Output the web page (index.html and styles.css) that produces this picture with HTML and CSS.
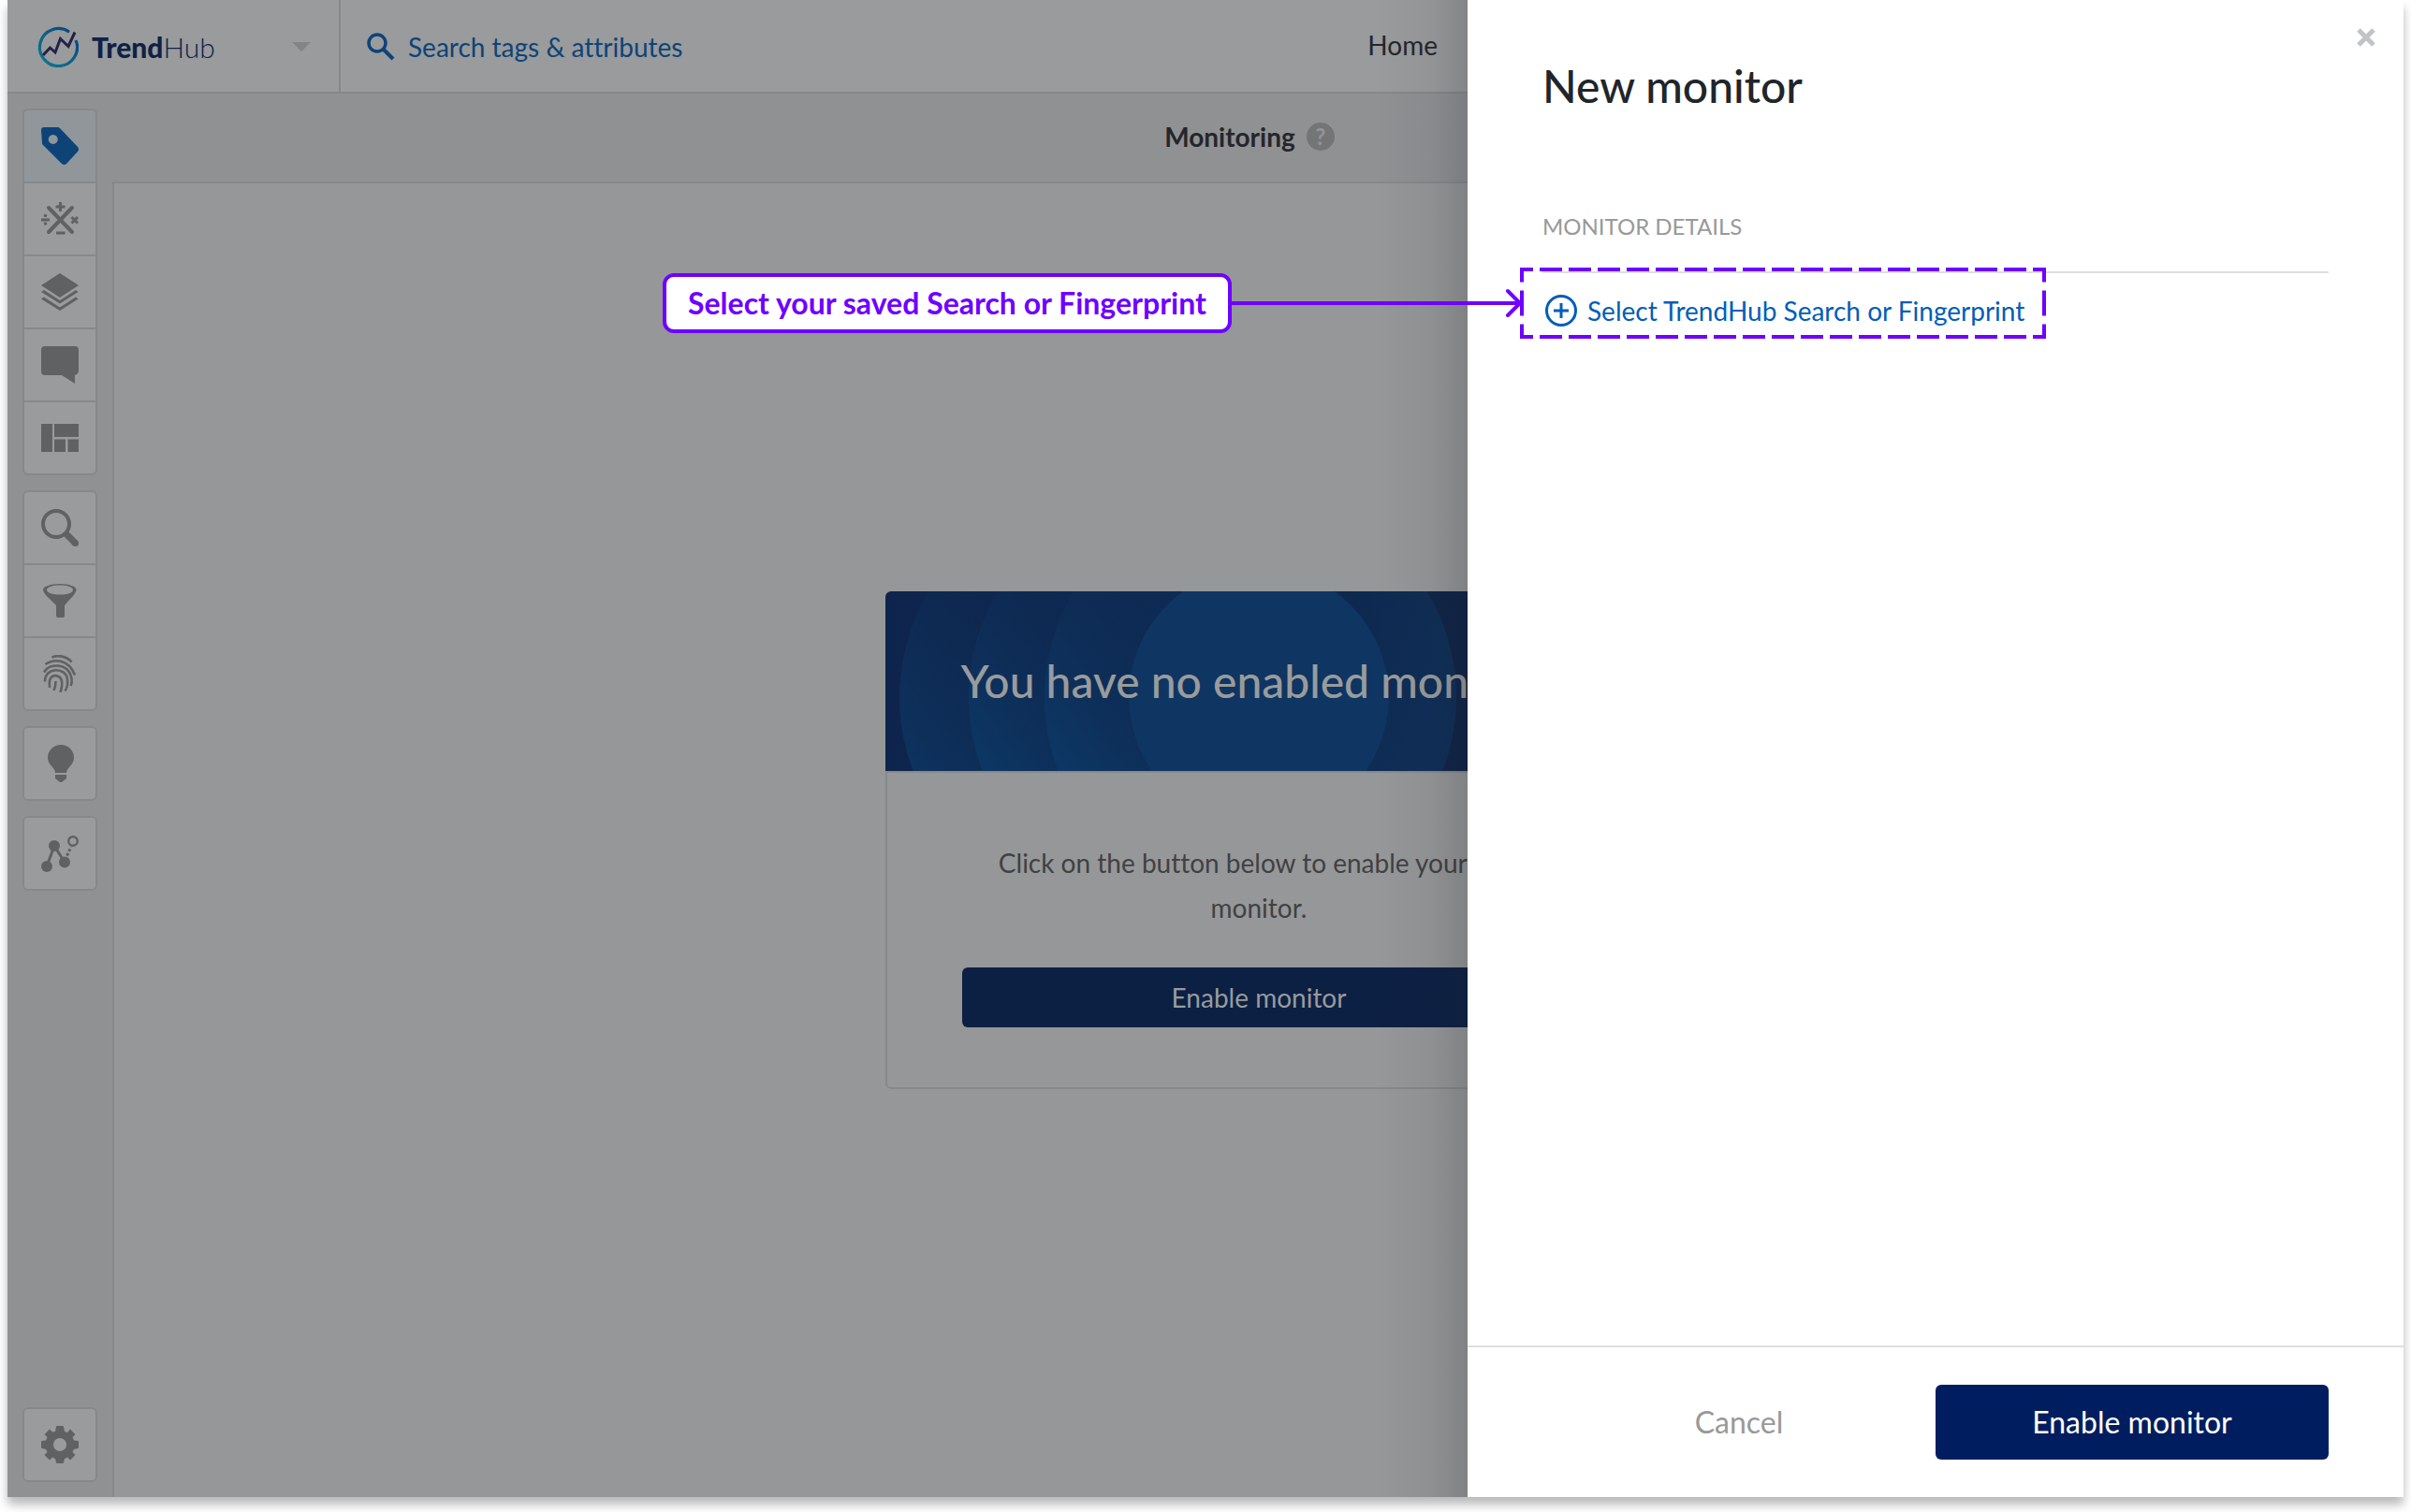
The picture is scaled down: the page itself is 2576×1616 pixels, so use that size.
FILE: index.html
```html
<!DOCTYPE html>
<html lang="en">
<head>
<meta charset="utf-8">
<meta name="viewport" content="width=device-width, initial-scale=1">
<title>TrendHub – New monitor</title>
<link rel="stylesheet" href="styles.css">
</head>
<body>
<div class="window">
  <header class="topbar">
    <button class="brand" type="button" aria-label="Switch application">
      <svg class="brand-mark" viewBox="0 0 44 44" aria-hidden="true">
        <defs>
          <linearGradient id="ring" x1="0" y1="1" x2="1" y2="0">
            <stop offset="0" stop-color="#0a7a8e"/>
            <stop offset="0.5" stop-color="#0a5f8a"/>
            <stop offset="1" stop-color="#0c3f80"/>
          </linearGradient>
        </defs>
        <path d="M34 6.200A20 20 0 1 0 41 15" fill="none" stroke="url(#ring)" stroke-width="3.200"/>
        <path d="M6 31L13.500 23L19 28L24.500 13.500L33 21.500L40 6.500" fill="none" stroke="#25204b" stroke-width="3"/>
      </svg>
      <span class="brand-name"><b>Trend</b>Hub</span>
      <span class="brand-caret"></span>
    </button>
    <label class="search">
      <svg class="search-icon" viewBox="0 0 30 30" aria-hidden="true">
        <circle cx="11" cy="11" r="9" fill="none" stroke="#0e4378" stroke-width="3.500"/>
        <path d="M17.500 17.500L28 28" stroke="#0e4378" stroke-width="4"/>
      </svg>
      <input class="search-input" type="text" placeholder="Search tags &amp; attributes" aria-label="Search tags and attributes">
    </label>
    <nav class="nav"><a class="nav-link" href="#home">Home</a></nav>
  </header>

  <div class="body">
    <aside class="sidebar">
      <div class="tools">
        <button class="tool tool-active" type="button" aria-label="Tags">
          <svg viewBox="0 0 40 40"><path fill-rule="evenodd" d="M3 0H17.500Q19 0 20 1L39 21Q41 23.500 39 26L27 39Q24.500 41 22 39L1.500 18.500Q1 18 1 17L0 3Q0 0 3 0ZM12.700 8a5 5 0 1 0 .01 0Z"/></svg>
        </button>
        <button class="tool" type="button" aria-label="Formulas">
          <svg viewBox="0 0 40 40"><path d="M8 8L33 34M33 8L8 34" fill="none" stroke="currentColor" stroke-width="4" stroke-linecap="round"/><path d="M20.500 2V12M15.500 7H25.500M0 21H9M16 35H25.500M32.500 18L39 24.500M39 18L32.500 24.500" fill="none" stroke="currentColor" stroke-width="3"/><circle cx="4.500" cy="16.500" r="1.800"/><circle cx="4.500" cy="25" r="1.800"/></svg>
        </button>
        <button class="tool" type="button" aria-label="Layers">
          <svg viewBox="0 0 40 40"><path d="M20 0L40 13L20 26L0 13Z"/><path d="M0 20L3 18L20 29L37 18L39.500 20L20 32.500ZM0 27.500L3 25.500L20 36.500L37 25.500L39.500 27.500L20 40Z"/></svg>
        </button>
        <button class="tool" type="button" aria-label="Comments">
          <svg viewBox="0 0 40 40"><path d="M4 0H36Q40 0 40 4V26Q40 30 36 31V40L22 31H4Q0 31 0 27V4Q0 0 4 0Z"/></svg>
        </button>
        <button class="tool" type="button" aria-label="Dashboards">
          <svg viewBox="0 0 40 40"><path d="M0 5H12V35H0ZM14 5H40V19H14ZM14 21.500H26V35H14ZM28.500 21.500H40V35H28.500Z"/></svg>
        </button>
      </div>
      <div class="tools">
        <button class="tool" type="button" aria-label="Search">
          <svg viewBox="0 0 40 40"><circle cx="16" cy="16" r="14" fill="none" stroke="currentColor" stroke-width="4"/><path d="M25.500 25.500L36.500 36.500" stroke="currentColor" stroke-width="7"/><circle cx="36.500" cy="36.500" r="3.500"/></svg>
        </button>
        <button class="tool" type="button" aria-label="Filter">
          <svg viewBox="0 0 40 40"><path fill-rule="evenodd" d="M20 2C30 2 37.500 5 37.500 8C37.500 12 33 16 25 25V36Q25 38 22 38H18Q16 38 16 36V25C7 16 2 12 2 8C2 5 10 2 20 2ZM20 3.500C12 3.500 6 5.500 6 8.500C6 11.500 12 13.500 20 13.500C28 13.500 34 11.500 34 8.500C34 5.500 28 3.500 20 3.500Z"/></svg>
        </button>
        <button class="tool" type="button" aria-label="Fingerprints">
          <svg viewBox="0 0 40 40"><g fill="none" stroke="currentColor" stroke-width="2.600"><path d="M11.500 2.500C18 -.500 27 1.500 32.500 7.500"/><path d="M4.500 10C13 4 29 3.500 36 21.500"/><path d="M3 18.500C9 8 28 9 32 23C33 27 33 30 31.500 33"/><path d="M4 28.500C4 12 27 13 28 26C28.500 31 28 35 25.500 38.500"/><path d="M9 35C9 31 8 28 10 25C13 20 21 22 22 28C22.500 32 22 36 20.500 40"/><path d="M13.500 38C15 35 15.500 32 15.500 28"/></g></svg>
        </button>
      </div>
      <div class="tools">
        <button class="tool" type="button" aria-label="Insights">
          <svg viewBox="0 0 40 40"><path d="M15 30C15 24 7 22 7 14A14 14 0 0 1 35 14C35 22 27 24 27 30ZM15 32H27V36L22.500 39.500Q21 40.500 19.500 39.500L15 36Z"/></svg>
        </button>
      </div>
      <div class="tools">
        <button class="tool" type="button" aria-label="Predictions">
          <svg viewBox="0 0 40 40"><circle cx="6" cy="34" r="6"/><circle cx="14" cy="12" r="6"/><circle cx="25" cy="29.500" r="6"/><path d="M6 34L14 12L25 29.500" fill="none" stroke="currentColor" stroke-width="3"/><path d="M27.500 22.500L32 13" stroke="currentColor" stroke-width="3" stroke-dasharray="3 2"/><circle cx="34" cy="7" r="4.800" fill="none" stroke="currentColor" stroke-width="2.400"/></svg>
        </button>
      </div>
      <div class="tools tools-bottom">
        <button class="tool" type="button" aria-label="Settings">
          <svg viewBox="0 0 40 40"><path fill-rule="evenodd" d="M16 1Q16 0 17 0H23Q24 0 24 1L25 6L28 7L31 3.500L36.500 9L33.500 12L35 15.500L39 16Q40 16 40 17V23Q40 24 39 24L35 25L33.500 28L36.500 31L31 36.500L28 33.500L25 35L24 39Q24 40 23 40H17Q16 40 16 39L15 35L12 33.500L9 36.500L3.500 31L6.500 28L5 25L1 24Q0 24 0 23V17Q0 16 1 16L5 15.500L6.500 12L3.500 9L9 3.500L12 6.500L15 6ZM20 13a7 7 0 1 0 .01 0Z"/></svg>
        </button>
      </div>
    </aside>

    <main class="main">
      <div class="titlebar">
        <h1 class="page-title">Monitoring</h1>
        <button class="help" type="button" aria-label="Help">?</button>
      </div>
      <section class="canvas">
        <article class="card">
          <div class="banner">
            <svg class="banner-art" viewBox="0 0 800 192" preserveAspectRatio="xMidYMid slice" aria-hidden="true">
              <defs>
                <linearGradient id="base" x1="0" y1="0" x2="1" y2="0">
                  <stop offset="0" stop-color="#0e244c"/>
                  <stop offset="0.4" stop-color="#0d2a54"/>
                  <stop offset="1" stop-color="#10203f"/>
                </linearGradient>
                <linearGradient id="disc" x1="0" y1="0.7" x2="0.6" y2="0.3">
                  <stop offset="0" stop-color="#0c4070" stop-opacity="0.600"/>
                  <stop offset="0.6" stop-color="#0d3058" stop-opacity="0.100"/>
                  <stop offset="1" stop-color="#0d3058" stop-opacity="0"/>
                </linearGradient>
                <linearGradient id="disc-right" x1="0" y1="0" x2="1" y2="0.2">
                  <stop offset="0.7" stop-color="#0e3562" stop-opacity="0"/>
                  <stop offset="1" stop-color="#0e3562" stop-opacity="0.600"/>
                </linearGradient>
              </defs>
              <rect width="800" height="192" fill="url(#base)"/>
              <circle cx="236" cy="113" r="220" fill="url(#disc)"/>
              <circle cx="310" cy="113" r="220" fill="url(#disc)"/>
              <circle cx="391" cy="113" r="220" fill="url(#disc)"/>
              <circle cx="391" cy="113" r="220" fill="url(#disc-right)"/>
              <circle cx="400" cy="113" r="139" fill="#0f3562"/>
            </svg>
            <h2 class="banner-title">You have no enabled monitors</h2>
          </div>
          <div class="card-body">
            <p class="card-text">Click on the button below to enable your first monitor.</p>
            <button class="card-button" type="button">Enable monitor</button>
          </div>
        </article>
      </section>
    </main>
  </div>

  <section class="drawer" role="dialog" aria-labelledby="drawer-title">
    <button class="close" type="button" aria-label="Close">
      <svg viewBox="0 0 20 20"><path d="M2 2L18 18M18 2L2 18" stroke="#c2c3c4" stroke-width="5"/></svg>
    </button>
    <div class="drawer-body">
      <h2 class="drawer-title" id="drawer-title">New monitor</h2>
      <h3 class="section-title">MONITOR DETAILS</h3>
      <button class="select-link" type="button">
        <svg class="plus" viewBox="0 0 34 34" aria-hidden="true"><circle cx="17" cy="17" r="15.500" fill="none" stroke="#005eb8" stroke-width="3"/><path d="M17 9V25M9 17H25" stroke="#005eb8" stroke-width="3"/></svg>
        <span>Select TrendHub Search or Fingerprint</span>
        <svg class="highlight" viewBox="0 0 562 76" aria-hidden="true">
          <g fill="none" stroke="#6f00ff" stroke-width="4">
            <path d="M2 2H560M2 74H560" stroke-dasharray="24 7" stroke-dashoffset="12"/>
            <path d="M2 2V74M560 2V74" stroke-dasharray="27 9" stroke-dashoffset="13.500"/>
            <path d="M0 2H4M558 2H562M0 74H4M558 74H562"/>
          </g>
        </svg>
        <span class="callout">
          <span class="callout-label">Select your saved Search or Fingerprint</span>
          <svg class="callout-arrow" viewBox="0 0 312 32" aria-hidden="true"><path d="M0 16H308M295 3L308 16L295 29" fill="none" stroke="#6f00ff" stroke-width="4" stroke-linecap="round"/></svg>
        </span>
      </button>
    </div>
    <footer class="drawer-footer">
      <button class="cancel" type="button">Cancel</button>
      <button class="confirm" type="button">Enable monitor</button>
    </footer>
  </section>
</div>
</body>
</html>
```
FILE: styles.css
```css
* {
  box-sizing: border-box;
}

body {
  margin: 0;
  padding: 0 8px 16px;
  min-height: 100vh;
  display: flex;
  background: #fff;
  color: #212529;
  font-family: Lato, "Liberation Sans", sans-serif;
  font-size: 28px;
  font-variant-ligatures: none;
  line-height: 48px;
}

button,
input {
  font: inherit;
  font-variant-ligatures: none;
  color: inherit;
  margin: 0;
  padding: 0;
  border: 0;
  background: none;
}

h1,
h2,
h3,
p {
  margin: 0;
}

.window {
  --drawer: 1000px;
  --line: #87888a;
  --surface: #999b9c;
  position: relative;
  flex: 1;
  display: flex;
  flex-direction: column;
  background: #909193;
  box-shadow: 0 8px 10px rgba(0, 0, 0, 0.28);
}

/* Top bar */

.topbar {
  display: flex;
  height: 100px;
  background: var(--surface);
  border-bottom: 2px solid var(--line);
}

.brand {
  width: 356px;
  display: flex;
  align-items: center;
  padding: 2px 30px 0 32px;
  border-right: 2px solid var(--line);
  text-align: left;
}

.brand-mark {
  width: 44px;
  height: 44px;
}

.brand-name {
  flex: 1;
  margin-left: 14px;
  color: #0f2148;
  font-size: 30px;
  font-weight: 300;
}

.brand-name b {
  font-weight: 900;
}

.brand-caret {
  border: 10px solid transparent;
  border-top-color: #838486;
  border-bottom: 0;
}

.search {
  flex: 1;
  display: flex;
  align-items: center;
  gap: 14px;
  padding: 2px 30px 0 28px;
}

.search-icon {
  width: 30px;
  height: 30px;
}

.search-input {
  flex: 1;
  min-width: 0;
  color: #0e4378;
}

.search-input::placeholder {
  color: #0e4378;
  opacity: 1;
}

.nav {
  display: flex;
  align-items: center;
  padding-right: calc(var(--drawer) + 32px);
  padding-bottom: 2px;
}

.nav-link {
  color: #24262b;
  text-decoration: none;
}

/* Sidebar */

.body {
  flex: 1;
  display: flex;
}

.sidebar {
  width: 112px;
  display: flex;
  flex-direction: column;
  gap: 16px;
  padding: 16px;
}

.tools {
  width: 80px;
  display: flex;
  flex-direction: column;
  gap: 2px;
  overflow: hidden;
  background: var(--line);
  border: 2px solid var(--line);
  border-radius: 6px;
}

.tools-bottom {
  margin-top: auto;
}

.tool {
  height: 76px;
  display: flex;
  align-items: center;
  justify-content: center;
  background: var(--surface);
  color: #606163;
}

.tool-active {
  background: #909699;
  color: #0e4378;
}

.tool svg {
  width: 40px;
  height: 40px;
  fill: currentColor;
}

/* Main area */

.main {
  flex: 1;
  display: flex;
  flex-direction: column;
}

.titlebar {
  height: 94px;
  display: flex;
  align-items: center;
  justify-content: center;
  gap: 12px;
  padding: 0 18px 2px 0;
}

.page-title {
  color: #24262b;
  font-size: 28px;
  font-weight: 700;
}

.help {
  width: 30px;
  height: 30px;
  border-radius: 50%;
  background: #747577;
  color: #939496;
  font-size: 24px;
  font-weight: 700;
  line-height: 30px;
}

.canvas {
  flex: 1;
  display: flex;
  align-items: center;
  justify-content: center;
  background: #969798;
  border: 2px solid var(--line);
  border-width: 2px 0 0 2px;
}

.card {
  width: 798px;
  overflow: hidden;
  border-radius: 6px;
}

.banner {
  height: 192px;
  display: grid;
  place-items: center;
}

.banner-art,
.banner-title {
  grid-area: 1 / 1;
}

.banner-art {
  width: 100%;
  height: 192px;
}

.banner-title {
  color: #999b9c;
  font-size: 48px;
  font-weight: 500;
}

.card-body {
  display: flex;
  flex-direction: column;
  gap: 40px;
  padding: 72px 80px 64px;
  border: 2px solid var(--line);
  border-radius: 0 0 6px 6px;
  text-align: center;
}

.card-text {
  color: #404143;
}

.card-button {
  height: 64px;
  border-radius: 6px;
  background: #0c2044;
  color: #999b9c;
}

/* Drawer */

.drawer {
  position: absolute;
  inset: 0 0 0 auto;
  z-index: 1;
  width: var(--drawer);
  display: flex;
  flex-direction: column;
  background: #fff;
}

.drawer::before {
  content: "";
  position: absolute;
  inset: 0 100% 0 auto;
  width: 96px;
  background: linear-gradient(to left, rgba(28, 30, 40, 0.18), rgba(28, 30, 40, 0.06) 40%, transparent);
}

.close {
  position: absolute;
  top: 30px;
  right: 30px;
  width: 20px;
  height: 20px;
  display: flex;
}

.drawer-body {
  flex: 1;
  padding: 64px 80px;
}

.drawer-title {
  font-size: 48px;
  font-weight: 500;
  line-height: 56px;
}

.section-title {
  margin-top: 98px;
  padding-bottom: 24px;
  border-bottom: 2px solid #dedede;
  color: #999;
  font-size: 24px;
  font-weight: 400;
}

.select-link {
  position: relative;
  display: flex;
  align-items: center;
  gap: 11px;
  margin-top: 16px;
  padding-left: 3px;
  color: #005eb8;
  white-space: nowrap;
}

.plus {
  width: 34px;
  height: 34px;
}

.highlight {
  position: absolute;
  left: -24px;
  top: -22px;
  width: 562px;
  height: 76px;
}

.callout {
  position: absolute;
  right: 100%;
  top: -16px;
  margin-right: 20px;
  display: flex;
  align-items: center;
}

.callout-label {
  width: 608px;
  border: 4px solid #6f00ff;
  border-radius: 12px;
  background: #fff;
  color: #6f00ff;
  font-size: 32px;
  font-weight: 700;
  line-height: 56px;
  text-align: center;
}

.callout-arrow {
  width: 312px;
  height: 32px;
}

.drawer-footer {
  display: flex;
  padding: 40px 80px;
  border-top: 2px solid #dedede;
  font-size: 32px;
}

.cancel,
.confirm {
  flex: 1;
  height: 80px;
}

.cancel {
  color: #999;
}

.confirm {
  border-radius: 6px;
  background: #001e5f;
  color: #fff;
}
```
